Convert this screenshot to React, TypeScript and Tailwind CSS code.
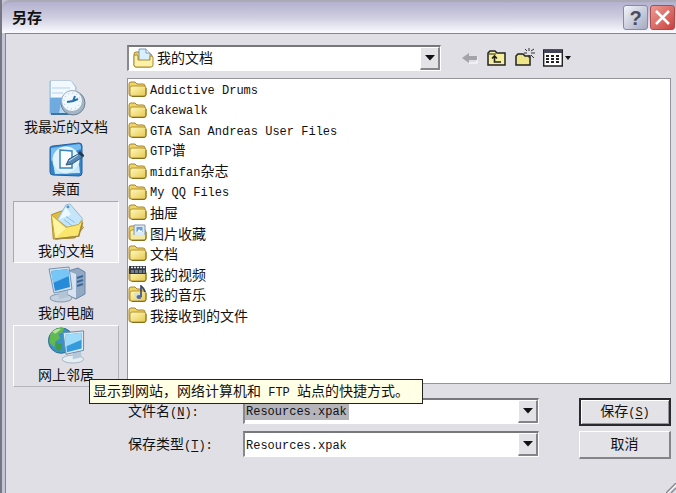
import React, { FC, ReactNode } from 'react';
import clsx from 'clsx';

type IconKind = 'folder' | 'pictures' | 'video' | 'music';

const files: { name: string; kind: IconKind }[] = [
	{ name: 'Addictive Drums', kind: 'folder' },
	{ name: 'Cakewalk', kind: 'folder' },
	{ name: 'GTA San Andreas User Files', kind: 'folder' },
	{ name: 'GTP谱', kind: 'folder' },
	{ name: 'midifan杂志', kind: 'folder' },
	{ name: 'My QQ Files', kind: 'folder' },
	{ name: '抽屉', kind: 'folder' },
	{ name: '图片收藏', kind: 'pictures' },
	{ name: '文档', kind: 'folder' },
	{ name: '我的视频', kind: 'video' },
	{ name: '我的音乐', kind: 'music' },
	{ name: '我接收到的文件', kind: 'folder' },
];

const latinFont = "font-['Liberation_Mono','Noto_Sans_CJK_SC',monospace] text-[12px]";

// Latin runs are set smaller than the Chinese around them
const Mixed: FC<{ text: string }> = ({ text }) => (
	<span className="whitespace-pre">
		{text
			.split(/([\x20-\x7e]+)/)
			.filter(Boolean)
			.map((part, i) =>
				/^[\x20-\x7e]/.test(part) ? (
					<span key={i} className={latinFont}>
						{part}
					</span>
				) : (
					part
				)
			)}
	</span>
);

const Hotkey: FC<{ letter: string; suffix?: string }> = ({
	letter,
	suffix = '',
}) => (
	<span className={latinFont}>
		(<u className="underline-offset-2">{letter}</u>){suffix}
	</span>
);

const FileIcon: FC<{ kind: IconKind }> = ({ kind }) => (
	<svg width="19" height="18" viewBox="0 0 19 18" className="shrink-0">
		<defs>
			<linearGradient id="fold" x1="0" y1="0" x2="1" y2="1">
				<stop offset="0" stopColor="#fffbbd" />
				<stop offset="1" stopColor="#e6c74e" />
			</linearGradient>
		</defs>
		<path
			d="M1 4q0-2 2-2h4l2 2h6q2 0 2 2v8q0 2-2 2H3q-2 0-2-2z"
			fill="#edd568"
			stroke="#a8842a"
		/>
		<path
			d="M2 8q0-2 2-2h12q2 0 2 2v6q0 2-2 2H4q-2 0-2-2z"
			fill="url(#fold)"
			stroke="#b59234"
		/>
		<path d="M4 16.5h12q2 0 2-2V8" fill="none" stroke="#86701f" />
		{kind === 'pictures' && (
			<g>
				<path d="M6 1h11v11H6z" fill="#dceaf5" stroke="#8496a8" />
				<path d="M8.500 3h6v5h-6z" fill="#6c9fce" />
				<path d="m9 8 2-3 2 2 1-1v2z" fill="#effaff" />
				<path d="M3 11h14v4H3z" fill="#f4e9a4" />
			</g>
		)}
		{kind === 'video' && (
			<g>
				<path d="M1 1h17v8H1z" fill="#343840" />
				<path
					d="M3 2.500h2m1 0h2m1 0h2m1 0h2m1 0h2"
					stroke="#dfe5ec"
					strokeWidth="1.500"
				/>
				<path d="M3 5h3v3H3zm4 0h3v3H7zm4 0h3v3h-3zm4 0h2v3h-2z" fill="#6f7f91" />
			</g>
		)}
		{kind === 'music' && (
			<g>
				<path d="M6 8h9l-2 5-4 2z" fill="#d3dce1" />
				<path
					d="M13 12V1q3 2 4 6"
					fill="none"
					stroke="#35486d"
					strokeWidth="1.600"
				/>
				<ellipse cx="11" cy="12" rx="2.500" ry="2" fill="#536b91" />
			</g>
		)}
	</svg>
);

const DocumentsIcon: FC = () => (
	<svg width="21" height="20" viewBox="0 0 21 20">
		<path
			d="M1 6q0-2 2-2h3l1 2h10q2 0 2 2v9q0 2-2 2H3q-2 0-2-2z"
			fill="#e7cd64"
			stroke="#a48437"
		/>
		<path d="M6 1h7l4 4v9H6z" fill="#d8efff" stroke="#7599b8" />
		<path d="M13 1v4h4" fill="#fff" stroke="#7599b8" />
		<path
			d="M1 8q0-1 2-1h1q1 0 1 2v3h12V9q0-1 1-1t2 1v8q0 2-2 2H3q-2 0-2-2z"
			fill="#fbf2a7"
			stroke="#aa8a34"
		/>
	</svg>
);

const RecentIcon: FC = () => (
	<svg width="40" height="38" viewBox="0 0 40 38">
		<path d="M4 2h21l5 6v27H4z" fill="#b5d8f3" stroke="#9dbdd8" />
		<path d="M5 2h20l4 6v8l-8-2-4 4H5z" fill="#f1f8fe" />
		<path d="M4 19h12l-3 15H4z" fill="#6fabde" />
		<path d="M6 9h18M6 14h11" stroke="#b4d3ea" />
		<path d="M5 35h22" stroke="#40719f" strokeWidth="2" />
		<circle cx="27" cy="24" r="12" fill="#a4b5c5" stroke="#6f8294" />
		<circle cx="26" cy="22" r="10.500" fill="#f0f8ff" stroke="#9cafc0" />
		<circle
			cx="26"
			cy="22"
			r="8"
			fill="none"
			stroke="#a6b7c8"
			strokeDasharray="1 3.200"
		/>
		<path
			d="m21 23 6-1 2-5M27 22l5-2"
			fill="none"
			stroke="#276fac"
			strokeWidth="2"
		/>
	</svg>
);

const DesktopIcon: FC = () => (
	<svg width="40" height="38" viewBox="0 0 40 38">
		<path
			d="M4 7q0-2 3-2l26-3q3 0 3 3v27q0 3-3 3l-26-1q-3 0-3-3z"
			fill="#3484cc"
			stroke="#20619f"
		/>
		<path d="M5 7l28-4q2 0 2 5L5 20z" fill="#77bdf0" />
		<circle cx="20" cy="19" r="13.500" fill="#e3f3fc" />
		<path d="M7 22q4 10 13 10 9-1 13-9l1 9-25 1z" fill="#c8e8fa" />
		<path
			d="m14 9 12 1v17H14z"
			fill="#fafdff"
			stroke="#3b86bd"
			strokeWidth="1.500"
		/>
		<path d="m20 24 3-6 11-6 4 3-12 8z" fill="#5389b6" stroke="#315777" />
		<path d="m33 11 4 4" stroke="#203b58" strokeWidth="3" />
		<path d="m23 20 9-6" stroke="#c0ddf2" />
	</svg>
);

const MyDocsIcon: FC = () => (
	<svg width="40" height="40" viewBox="0 0 40 40">
		<path
			d="m5 13 11-4 18 13 4 4-9 11-22 1z"
			fill="#debd3e"
			stroke="#ae8b2c"
		/>
		<path d="m20 3 4-1 13 15-9 14-17-13z" fill="#c5e6fa" stroke="#91b7d1" />
		<path d="m20 5 5 8-12 5z" fill="#eef9ff" />
		<circle cx="22" cy="5" r="1.500" fill="#4d91c5" />
		<path d="m20 15 9 6m-11-3 9 7" stroke="#81bde3" />
		<path
			d="M5 13l15 13 13-3 4-4-4 16-24 3z"
			fill="#fae66c"
			stroke="#caa83b"
		/>
		<path d="m6 15 14 12-11 10z" fill="#fff5a1" />
		<path
			d="m9 38 24-3 4-14"
			fill="none"
			stroke="#9c8547"
			strokeWidth="1.500"
		/>
	</svg>
);

const ComputerIcon: FC = () => (
	<svg width="40" height="38" viewBox="0 0 40 38">
		<path d="m22 6 10-3 7 4v22l-9 5-8-4z" fill="#91a9c5" stroke="#6d86a5" />
		<path d="m22 6 8 3v24l-8-3z" fill="#d7e4f0" />
		<path
			d="m31 13 6-2m-6 6 6-2m-6 6 6-2"
			stroke="#3b6a9a"
			strokeWidth="2"
		/>
		<ellipse cx="15" cy="33" rx="11" ry="4" fill="#c4d1df" stroke="#8298b1" />
		<path d="m12 25 8-1 2 8-9 2z" fill="#b3c4d6" />
		<path d="m3 4 20-2 3 22-18 4z" fill="#d5e3ef" stroke="#7193b7" />
		<path d="m5 6 17-2 2 18-15 4z" fill="#278bd8" />
		<path d="m5 6 17-2 1 7-16 7z" fill="#77c7f6" />
	</svg>
);

const NetworkIcon: FC = () => (
	<svg width="40" height="40" viewBox="0 0 40 40">
		<circle cx="15" cy="15" r="13" fill="#3c91c6" stroke="#276d91" />
		<path d="M4 8q5-7 14-6l-2 5-4 1 2 5-5 3-1 6-5-5z" fill="#63b951" />
		<path d="m10 17 6 2-2 7-4-2z" fill="#3e9c42" />
		<path d="M6 6q4-4 9-3l-6 5z" fill="#b9e39a" />
		<ellipse cx="27" cy="34" rx="11" ry="4" fill="#e6edf3" stroke="#a5b4c2" />
		<path d="m27 24 8-1 1 9-9 2z" fill="#b6c8d9" />
		<path d="m17 7 21-2v20l-18 4z" fill="#dceaf4" stroke="#668dab" />
		<path d="m19 9 17-2v16l-15 4z" fill="#359bdc" />
		<path d="m19 9 17-2v7l-16 7z" fill="#9edbf8" />
	</svg>
);

const DropArrow: FC = () => (
	<svg width="10" height="6" viewBox="0 0 10 6">
		<path d="M0 0h10L5 5.500z" fill="#111" />
	</svg>
);

const sunken =
	'border-t-2 border-l-2 border-b border-r border-t-[#77777c] border-l-[#88888d] border-b-white border-r-white bg-white';
const raised =
	'border-t border-l border-b-2 border-r-2 border-t-white border-l-white border-b-[#858589] border-r-[#858589] bg-[#e3e2e6]';

const arrowBox = clsx(
	'pointer-events-none absolute inset-y-0 right-0 flex w-5 items-center justify-center',
	raised
);

const Place: FC<{
	label: string;
	icon: ReactNode;
	className?: string;
	tooltip?: string;
}> = ({ label, icon, className, tooltip }) => (
	<div className="relative">
		<button
			className={clsx(
				'flex h-[62px] w-full flex-col items-center justify-end border pb-[3px] leading-[18px]',
				className || 'border-transparent'
			)}
		>
			{icon}
			<span className="whitespace-nowrap">{label}</span>
		</button>
		{tooltip && (
			<div
				role="tooltip"
				className="absolute top-[54px] left-[76px] z-10 w-[334px] border border-[#222] bg-[#ffffe5] px-[3px] leading-5"
			>
				<Mixed text={tooltip} />
			</div>
		)}
	</div>
);

const App: FC = () => (
	<div className="flex min-h-screen flex-col border-l-2 border-l-[#777783] bg-[#c5c4d6] font-['Noto_Sans_CJK_SC',sans-serif] text-[14px] text-[#111]">
		<header className="flex h-[33px] items-center justify-between rounded-tl-lg border-t-2 border-t-[#aaa9b6] bg-linear-to-b from-[#b3b1ce] via-[#cfcee1] to-[#fbfbff] pr-px pl-2">
			<h1 className="pl-[2px] text-[15px] font-bold">另存</h1>
			<div className="flex gap-[2px]">
				<button
					aria-label="帮助"
					className="flex size-[25px] items-center justify-center rounded-[3px] border border-[#858ba5] bg-linear-to-br from-[#f3f5fb] to-[#a5aac1] font-['Liberation_Sans',sans-serif] text-[20px] font-bold text-[#4b4c5c]"
				>
					?
				</button>
				<button
					aria-label="关闭"
					className="flex size-[25px] items-center justify-center rounded-[3px] border border-[#a84d51] bg-linear-to-br from-[#ec9a92] to-[#c93f40]"
				>
					<svg width="17" height="17" viewBox="0 0 17 17">
						<path d="m2 2 13 13m0-13L2 15" stroke="#fff" strokeWidth="2.500" />
					</svg>
				</button>
			</div>
		</header>

		<main className="relative ml-[3px] flex flex-1 flex-col border-t border-l border-[#858591] bg-[#e0dfe5] pt-[11px] pr-[5px] pl-[7px]">
			<div className="flex items-center pl-[114px]">
				<div className={clsx('relative h-[26px] w-[314px]', sunken)}>
					<select
						aria-label="保存在"
						className="h-full w-full appearance-none pb-1 pl-7 leading-5 outline-none"
					>
						<option>我的文档</option>
					</select>
					<span className="pointer-events-none absolute top-px left-1">
						<DocumentsIcon />
					</span>
					<span className={arrowBox}>
						<DropArrow />
					</span>
				</div>
				<div className="ml-[20px] flex items-center gap-2">
					<button aria-label="后退">
						<svg width="18" height="14" viewBox="0 0 18 14">
							<path d="M8 12h8V6" fill="none" stroke="#fff" />
							<path d="M1 7l7-5v3h8v4H8v3z" fill="#a4a3a8" />
						</svg>
					</button>
					<button aria-label="向上一级">
						<svg width="20" height="18" viewBox="0 0 20 18">
							<path
								d="M1 4l2-2h5l2 2h8v12H1z"
								fill="#f5ef9b"
								stroke="#222"
								strokeWidth="1.500"
							/>
							<path d="M2 5h7" stroke="#222" />
							<path
								d="M7.500 8v5H14M5 9.500 7.500 7 10 9.500"
								fill="none"
								stroke="#222"
								strokeWidth="1.600"
							/>
						</svg>
					</button>
					<button aria-label="新建文件夹">
						<svg width="20" height="20" viewBox="0 0 20 20">
							<path
								d="M1 8l2-2h5l2 2h5v9H1z"
								fill="#eee58b"
								stroke="#222"
								strokeWidth="1.500"
							/>
							<path
								d="M14 0v3m0 4v3M9 5h3m4 0h4M10 1l2 2m4 4 3 3m0-9-3 2"
								stroke="#333"
							/>
						</svg>
					</button>
					<button aria-label="查看" className="flex items-center gap-[2px]">
						<svg width="20" height="18" viewBox="0 0 20 18">
							<path
								d="M.700 1h18.600v16H.700z"
								fill="#fff"
								stroke="#222"
								strokeWidth="1.400"
							/>
							<path d="M1 1h18v3H1z" fill="#424356" />
							<path
								d="M3 7h3m2 0h3m2 0h3M3 10h3m2 0h3m2 0h3M3 13h3m2 0h3m2 0h3"
								stroke="#222"
								strokeWidth="1.800"
							/>
						</svg>
						<svg width="6" height="4" viewBox="0 0 6 4">
							<path d="M0 0h6L3 4z" fill="#111" />
						</svg>
					</button>
				</div>
			</div>

			<div className="mt-[6px] flex gap-2">
				<nav className="w-[106px] shrink-0">
					<Place label="我最近的文档" icon={<RecentIcon />} />
					<Place label="桌面" icon={<DesktopIcon />} />
					<Place
						label="我的文档"
						icon={<MyDocsIcon />}
						className="border-t-[#aaa9af] border-r-white border-b-white border-l-[#aaa9af] bg-[#ecebef]"
					/>
					<Place label="我的电脑" icon={<ComputerIcon />} />
					<Place
						label="网上邻居"
						icon={<NetworkIcon />}
						className="border-t-white border-r-[#b5b4ba] border-b-[#b5b4ba] border-l-white"
						tooltip="显示到网站，网络计算机和 FTP 站点的快捷方式。"
					/>
				</nav>
				<ul className="mt-px grid h-[306px] flex-1 auto-rows-fr border border-[#95949d] bg-white pb-[58px]">
					{files.map((file) => (
						<li key={file.name} className="flex items-center gap-[3px] leading-5">
							<FileIcon kind={file.kind} />
							<Mixed text={file.name} />
						</li>
					))}
				</ul>
			</div>

			<form
				className="mt-[11px] flex items-start justify-between pl-[115px]"
				onSubmit={(e) => e.preventDefault()}
			>
				<div className="grid grid-cols-[115px_296px] items-center gap-y-[7px]">
					<label htmlFor="filename" className="leading-4">
						文件名
						<Hotkey letter="N" suffix=":" />
					</label>
					<div className={clsx('relative flex h-[26px] items-center', sunken)}>
						<input
							id="filename"
							defaultValue="Resources.xpak"
							className={clsx(
								'h-4 w-[104px] bg-[#b5b4bb] pl-px outline-none',
								latinFont
							)}
						/>
						<span className={arrowBox}>
							<DropArrow />
						</span>
					</div>
					<label htmlFor="filetype" className="leading-4">
						保存类型
						<Hotkey letter="T" suffix=":" />
					</label>
					<div className={clsx('relative h-[26px]', sunken)}>
						<select
							id="filetype"
							className={clsx(
								'h-full w-full appearance-none pb-[2px] pl-px outline-none',
								latinFont
							)}
						>
							<option>Resources.xpak</option>
						</select>
						<span className={arrowBox}>
							<DropArrow />
						</span>
					</div>
				</div>
				<div className="flex w-[92px] flex-col gap-[5px]">
					<button
						type="submit"
						className="h-7 border-2 border-[#292930] bg-[#e3e2e6] pb-1 leading-5 shadow-[inset_1px_1px_#fff,inset_-1px_-1px_#97969c]"
					>
						保存
						<Hotkey letter="S" />
					</button>
					<button type="button" className={clsx('h-7 pb-1 leading-5', raised)}>
						取消
					</button>
				</div>
			</form>
			<svg
				width="10"
				height="10"
				viewBox="0 0 10 10"
				className="absolute right-0 bottom-0"
			>
				<path d="M0 10 10 0M5 10l5-5" stroke="#8d8c95" strokeWidth="1.500" />
				<path d="M2 10l8-8" stroke="#fff" />
			</svg>
		</main>
	</div>
);

export default App;
